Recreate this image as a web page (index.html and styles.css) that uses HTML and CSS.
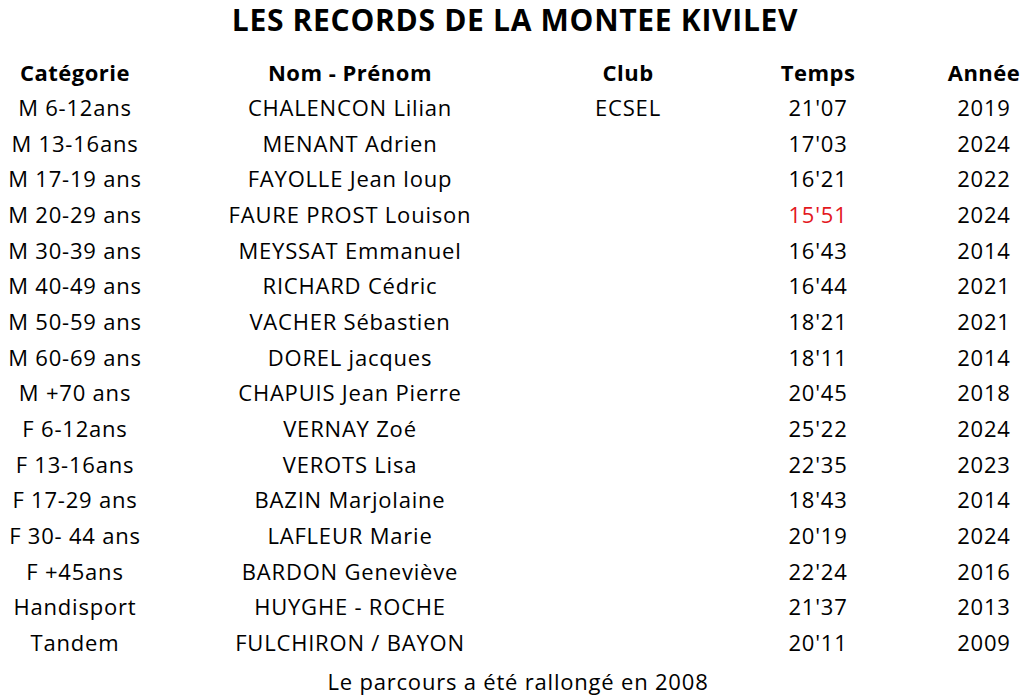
FILE: index.html
```html
<!DOCTYPE html>
<html lang="fr">
<head>
<meta charset="utf-8">
<title>Les records de la montée Kivilev</title>
<link rel="stylesheet" href="styles.css">
</head>
<body>
<div class="page">
  <h1 class="title">LES RECORDS DE LA MONTEE KIVILEV</h1>
  <div class="table">
    <div class="row head">
      <div class="c1">Catégorie</div><div class="c2">Nom - Prénom</div><div class="c3">Club</div><div class="c4">Temps</div><div class="c5">Année</div>
    </div>
    <div class="row"><div class="c1">M 6-12ans</div><div class="c2">CHALENCON Lilian</div><div class="c3">ECSEL</div><div class="c4">21'07</div><div class="c5">2019</div></div>
    <div class="row"><div class="c1">M 13-16ans</div><div class="c2">MENANT Adrien</div><div class="c3"></div><div class="c4">17'03</div><div class="c5">2024</div></div>
    <div class="row"><div class="c1">M 17-19 ans</div><div class="c2">FAYOLLE Jean loup</div><div class="c3"></div><div class="c4">16'21</div><div class="c5">2022</div></div>
    <div class="row"><div class="c1">M 20-29 ans</div><div class="c2">FAURE PROST Louison</div><div class="c3"></div><div class="c4 red">15'51</div><div class="c5">2024</div></div>
    <div class="row"><div class="c1">M 30-39 ans</div><div class="c2">MEYSSAT Emmanuel</div><div class="c3"></div><div class="c4">16'43</div><div class="c5">2014</div></div>
    <div class="row"><div class="c1">M 40-49 ans</div><div class="c2">RICHARD Cédric</div><div class="c3"></div><div class="c4">16'44</div><div class="c5">2021</div></div>
    <div class="row"><div class="c1">M 50-59 ans</div><div class="c2">VACHER Sébastien</div><div class="c3"></div><div class="c4">18'21</div><div class="c5">2021</div></div>
    <div class="row"><div class="c1">M 60-69 ans</div><div class="c2">DOREL jacques</div><div class="c3"></div><div class="c4">18'11</div><div class="c5">2014</div></div>
    <div class="row"><div class="c1">M +70 ans</div><div class="c2">CHAPUIS Jean Pierre</div><div class="c3"></div><div class="c4">20'45</div><div class="c5">2018</div></div>
    <div class="row"><div class="c1">F 6-12ans</div><div class="c2">VERNAY Zoé</div><div class="c3"></div><div class="c4">25'22</div><div class="c5">2024</div></div>
    <div class="row"><div class="c1">F 13-16ans</div><div class="c2">VEROTS Lisa</div><div class="c3"></div><div class="c4">22'35</div><div class="c5">2023</div></div>
    <div class="row"><div class="c1">F 17-29 ans</div><div class="c2">BAZIN Marjolaine</div><div class="c3"></div><div class="c4">18'43</div><div class="c5">2014</div></div>
    <div class="row"><div class="c1">F 30- 44 ans</div><div class="c2">LAFLEUR Marie</div><div class="c3"></div><div class="c4">20'19</div><div class="c5">2024</div></div>
    <div class="row"><div class="c1">F +45ans</div><div class="c2">BARDON Geneviève</div><div class="c3"></div><div class="c4">22'24</div><div class="c5">2016</div></div>
    <div class="row"><div class="c1">Handisport</div><div class="c2">HUYGHE - ROCHE</div><div class="c3"></div><div class="c4">21'37</div><div class="c5">2013</div></div>
    <div class="row"><div class="c1">Tandem</div><div class="c2">FULCHIRON / BAYON</div><div class="c3"></div><div class="c4">20'11</div><div class="c5">2009</div></div>
  </div>
  <p class="note">Le parcours a été rallongé en 2008</p>
</div>
</body>
</html>
```

FILE: styles.css
```css
html, body {
  margin: 0;
  padding: 0;
  background: #ffffff;
}
.page {
  width: 1024px;
  font-family: "Open Sans", "Liberation Sans", sans-serif;
  color: #000;
}
.title {
  margin: 0;
  height: 53.5px;
  line-height: 40px;
  font-size: 30px;
  font-weight: 700;
  letter-spacing: 0.7px;
  text-align: center;
  padding-left: 6px;
  box-sizing: border-box;
}
.table {
  display: flex;
  flex-direction: column;
}
.row {
  display: grid;
  grid-template-columns: 150px 400px 156px 224px 94px;
  height: 35.67px;
  line-height: 35.67px;
  font-size: 22px;
  letter-spacing: 0.8px;
  white-space: nowrap;
}
.row > div {
  text-align: center;
}
.row .c5 {
  padding-left: 14px;
}
.row.head {
  height: 36.5px;
  line-height: 36.5px;
  font-weight: 700;
  letter-spacing: 0.5px;
}
.red {
  color: #e3181e;
}
.note {
  margin: 2.6px 0 0;
  line-height: 36px;
  font-size: 22px;
  letter-spacing: 0.8px;
  text-align: center;
  padding-left: 12px;
}
```
